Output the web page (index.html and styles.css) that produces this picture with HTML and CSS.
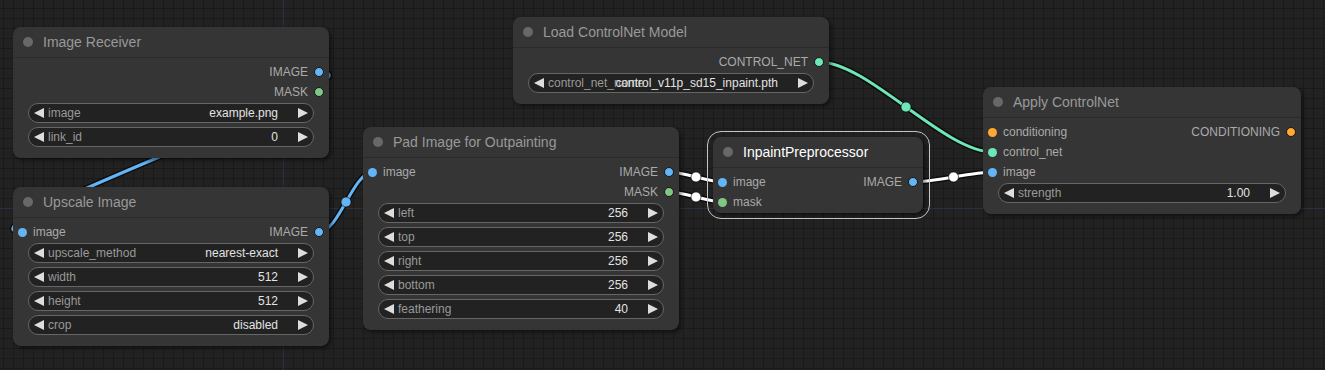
FILE: index.html
```html
<!DOCTYPE html>
<html lang="en">
<head>
    <meta charset="UTF-8">
    <meta name="viewport" content="width=device-width, initial-scale=1.0">
    <title>Inpaint Outpainting Graph</title>
    <link rel="stylesheet" href="styles.css">
</head>
<body>
    <div class="canvas">
        <!-- links are drawn under the nodes -->
        <svg class="links" width="1325" height="370" viewBox="0 0 1325 370">
            <line class="axis" x1="283.5" y1="0" x2="283.5" y2="370"/>
            <line class="axis" x1="0" y1="208.5" x2="1325" y2="208.5"/>

            <g class="shadow">
                <path d="M319 72 C403 72, -61 232, 23 232"/>
                <path d="M319 232 C339 232, 353 172, 373 172"/>
                <path d="M669 172 C683 172, 709 182, 723 182"/>
                <path d="M669 192 C683 192, 709 202, 723 202"/>
                <path d="M914 182 C934 182, 973 172, 993 172"/>
                <path d="M819 62 C868 62, 944 152, 993 152"/>
            </g>

            <path class="link image" d="M319 72 C403 72, -61 232, 23 232"/>
            <path class="link image" d="M319 232 C339 232, 353 172, 373 172"/>
            <path class="link active" d="M669 172 C683 172, 709 182, 723 182"/>
            <path class="link active" d="M669 192 C683 192, 709 202, 723 202"/>
            <path class="link active" d="M914 182 C934 182, 973 172, 993 172"/>
            <path class="link cnet" d="M819 62 C868 62, 944 152, 993 152"/>

            <circle class="mid image" cx="346" cy="202" r="5"/>
            <circle class="mid active" cx="696" cy="177" r="5"/>
            <circle class="mid active" cx="696" cy="197" r="5"/>
            <circle class="mid active" cx="953.5" cy="177" r="5"/>
            <circle class="mid cnet" cx="906" cy="107" r="5"/>
        </svg>

        <!-- Image Receiver -->
        <div class="node n-receiver">
            <div class="title"><span class="box"></span>Image Receiver</div>
            <div class="body">
                <div class="slots">
                    <div class="slot"><span class="out">IMAGE<i class="pin image"></i></span></div>
                    <div class="slot"><span class="out">MASK<i class="pin mask"></i></span></div>
                </div>
                <div class="widgets">
                    <div class="widget"><i class="arr l"></i><span class="label">image</span><span class="value">example.png</span><i class="arr r"></i></div>
                    <div class="widget"><i class="arr l"></i><span class="label">link_id</span><span class="value">0</span><i class="arr r"></i></div>
                </div>
            </div>
        </div>

        <!-- Upscale Image -->
        <div class="node n-upscale">
            <div class="title"><span class="box"></span>Upscale Image</div>
            <div class="body">
                <div class="slots">
                    <div class="slot"><span class="in"><i class="pin image"></i>image</span><span class="out">IMAGE<i class="pin image"></i></span></div>
                </div>
                <div class="widgets">
                    <div class="widget"><i class="arr l"></i><span class="label">upscale_method</span><span class="value">nearest-exact</span><i class="arr r"></i></div>
                    <div class="widget"><i class="arr l"></i><span class="label">width</span><span class="value">512</span><i class="arr r"></i></div>
                    <div class="widget"><i class="arr l"></i><span class="label">height</span><span class="value">512</span><i class="arr r"></i></div>
                    <div class="widget"><i class="arr l"></i><span class="label">crop</span><span class="value">disabled</span><i class="arr r"></i></div>
                </div>
            </div>
        </div>

        <!-- Pad Image for Outpainting -->
        <div class="node n-pad">
            <div class="title"><span class="box"></span>Pad Image for Outpainting</div>
            <div class="body">
                <div class="slots">
                    <div class="slot"><span class="in"><i class="pin image"></i>image</span><span class="out">IMAGE<i class="pin image"></i></span></div>
                    <div class="slot"><span class="out">MASK<i class="pin mask"></i></span></div>
                </div>
                <div class="widgets">
                    <div class="widget"><i class="arr l"></i><span class="label">left</span><span class="value">256</span><i class="arr r"></i></div>
                    <div class="widget"><i class="arr l"></i><span class="label">top</span><span class="value">256</span><i class="arr r"></i></div>
                    <div class="widget"><i class="arr l"></i><span class="label">right</span><span class="value">256</span><i class="arr r"></i></div>
                    <div class="widget"><i class="arr l"></i><span class="label">bottom</span><span class="value">256</span><i class="arr r"></i></div>
                    <div class="widget"><i class="arr l"></i><span class="label">feathering</span><span class="value">40</span><i class="arr r"></i></div>
                </div>
            </div>
        </div>

        <!-- Load ControlNet Model -->
        <div class="node n-loadcn">
            <div class="title"><span class="box"></span>Load ControlNet Model</div>
            <div class="body">
                <div class="slots">
                    <div class="slot"><span class="out">CONTROL_NET<i class="pin cnet"></i></span></div>
                </div>
                <div class="widgets">
                    <div class="widget crowded"><i class="arr l"></i><span class="label">control_net_name</span><span class="value">control_v11p_sd15_inpaint.pth</span><i class="arr r"></i></div>
                </div>
            </div>
        </div>

        <!-- InpaintPreprocessor (selected) -->
        <div class="node n-inpaint selected">
            <div class="title"><span class="box"></span>InpaintPreprocessor</div>
            <div class="body">
                <div class="slots">
                    <div class="slot"><span class="in"><i class="pin image"></i>image</span><span class="out">IMAGE<i class="pin image"></i></span></div>
                    <div class="slot"><span class="in"><i class="pin mask"></i>mask</span></div>
                </div>
            </div>
        </div>

        <!-- Apply ControlNet -->
        <div class="node n-apply">
            <div class="title"><span class="box"></span>Apply ControlNet</div>
            <div class="body">
                <div class="slots">
                    <div class="slot"><span class="in"><i class="pin cond"></i>conditioning</span><span class="out">CONDITIONING<i class="pin cond"></i></span></div>
                    <div class="slot"><span class="in"><i class="pin cnet"></i>control_net</span></div>
                    <div class="slot"><span class="in"><i class="pin image"></i>image</span></div>
                </div>
                <div class="widgets">
                    <div class="widget"><i class="arr l"></i><span class="label">strength</span><span class="value">1.00</span><i class="arr r"></i></div>
                </div>
            </div>
        </div>
    </div>
</body>
</html>
```

FILE: styles.css
```css
body {
    margin: 0;
    background: #222;
    font-family: "Liberation Sans", Arial, sans-serif;
    overflow: hidden;
}

.canvas {
    position: relative;
    width: 1325px;
    height: 370px;
    background-color: #222;
    background-image:
        linear-gradient(to right, #1a1a1a 1px, transparent 1px),
        linear-gradient(to bottom, #1a1a1a 1px, transparent 1px);
    background-size: 10px 10px;
    background-position: 3px 8px;
}

/* links */
.links {
    position: absolute;
    left: 0;
    top: 0;
}

.axis {
    stroke: #283044;
    stroke-width: 1;
}

.shadow path {
    fill: none;
    stroke: rgba(0, 0, 0, 0.6);
    stroke-width: 6;
}

.link {
    fill: none;
    stroke-width: 3;
}

.mid {
    stroke: rgba(0, 0, 0, 0.6);
    stroke-width: 1;
}

.link.image { stroke: #64b5f6; }
.link.active { stroke: #fff; }
.link.cnet { stroke: #6ee7b7; }

.mid.image { fill: #64b5f6; }
.mid.active { fill: #fff; }
.mid.cnet { fill: #6ee7b7; }

/* nodes */
.node {
    position: absolute;
    z-index: 1;
    background: #353535;
    border-radius: 8px;
    box-shadow: 2px 2px 4px rgba(0, 0, 0, 0.55);
}

.n-receiver { left: 13px; top: 27px; width: 316px; }
.n-upscale { left: 13px; top: 187px; width: 316px; }
.n-pad { left: 363px; top: 127px; width: 316px; }
.n-loadcn { left: 513px; top: 17px; width: 316px; }
.n-inpaint { left: 713px; top: 137px; width: 210px; }
.n-apply { left: 983px; top: 87px; width: 318px; }

.node.selected::after {
    content: "";
    position: absolute;
    inset: -6px -7px -6px -6px;
    border: 1.5px solid #c4c4c4;
    border-radius: 14px;
    pointer-events: none;
}

.title {
    height: 30px;
    display: flex;
    align-items: center;
    gap: 10px;
    padding-left: 10px;
    border-bottom: 1px solid #2a2a2a;
    color: #999;
    font-size: 14px;
}

.selected .title {
    color: #fff;
}

.title .box {
    width: 10px;
    height: 10px;
    border-radius: 50%;
    background: #686868;
}

.body {
    padding-top: 4px;
}

.slots {
    margin-bottom: 1px;
}

.slot {
    display: flex;
    align-items: center;
    height: 20px;
    font-size: 12px;
    color: #aaa;
}

.slot .in {
    display: flex;
    align-items: center;
    gap: 6px;
    padding-left: 5px;
}

.slot .out {
    display: flex;
    align-items: center;
    gap: 6px;
    margin-left: auto;
    padding-right: 5px;
}

.pin {
    display: block;
    width: 9px;
    height: 9px;
    border-radius: 50%;
}

.out .pin {
    width: 8px;
    height: 8px;
    border: 1px solid #161616;
}

.pin.image { background: #64b5f6; }
.pin.mask { background: #81c784; }
.pin.cnet { background: #6ee7b7; }
.pin.cond { background: #ffa931; }

/* widgets */
.widgets {
    display: flex;
    flex-direction: column;
    gap: 4px;
    padding: 0 15px 11px;
}

.widget {
    display: flex;
    align-items: center;
    height: 20px;
    box-sizing: border-box;
    padding: 0 5px;
    background: #222;
    border: 1px solid #666;
    border-radius: 10px;
    font-size: 12px;
    white-space: nowrap;
}

.arr {
    display: block;
    width: 0;
    height: 0;
    border-style: solid;
    flex: none;
}

.arr.l {
    border-width: 5px 10px 5px 0;
    border-color: transparent #ddd transparent transparent;
    margin-right: 4px;
}

.arr.r {
    border-width: 5px 0 5px 10px;
    border-color: transparent transparent transparent #ddd;
    margin-left: 20px;
}

.widget .label {
    color: #999;
}

.widget .value {
    margin-left: auto;
    color: #e2e2e2;
}

/* long value runs over the label, as in the canvas */
.widget.crowded .label {
    flex: 0 0 0;
    width: 0;
    overflow: visible;
}
```
